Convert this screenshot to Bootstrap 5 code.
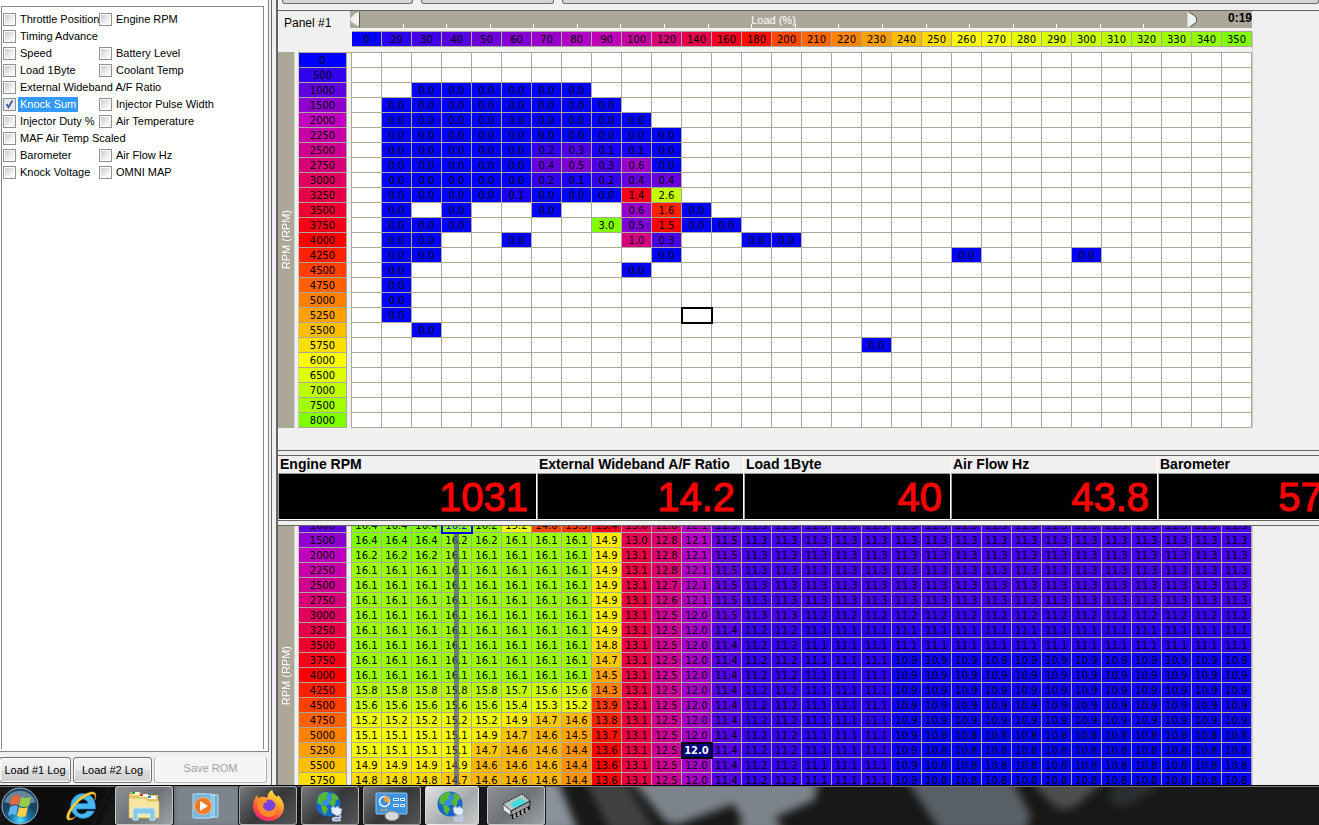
<!DOCTYPE html>
<html lang="en">
<head>
<meta charset="utf-8">
<meta name="viewport" content="width=device-width, initial-scale=1">
<title>ROM tuning log viewer</title>
<link href="https://cdn.jsdelivr.net/npm/bootstrap@5.3.0/dist/css/bootstrap.min.css" rel="stylesheet">
<style>
  :root { --face: #f0f0f0; --line: #aca899; --edge: #646464; }
  body { background: var(--face); color: #000; font: 11px/15px "Liberation Sans", Arial, sans-serif; }

  /* sidebar */
  .side { flex: 0 0 272px; border-right: 1px solid var(--edge); }
  .side-box { border: 1px solid #828790; border-width: 0 1px 1px 0; background: #fff; margin-right: 2px; padding: 6px 4px 2px 1px; }
  .side-list { border: 1px solid #828790; border-bottom: 0; padding: 4px 0 0 1px; }
  .pid { height: 17px; white-space: nowrap; }
  .pid-first { width: 96px; }
  .pid input { appearance: none; flex: none; width: 13px; height: 13px; margin: 0 2px 0 0; border: 1px solid #8e8f8f; background: linear-gradient(135deg, #c8ccd2, #f6f6f6 75%) content-box #f4f4f4; padding: 1px; }
  .pid input:checked { background: url("data:image/svg+xml,%3Csvg xmlns='http://www.w3.org/2000/svg' viewBox='0 0 11 11'%3E%3Cpath d='M2.5 5l2 3.2L8.500 1.500' fill='none' stroke='%234b60a8' stroke-width='2'/%3E%3C/svg%3E") #e9ebef; }
  .pid label { padding: 0 2px; }
  .pid input:checked + label { background: #3399ff; color: #fff; }
  .side-foot { height: 33px; gap: 2px; padding-top: 5px; }
  .push { width: 79px; height: 26px; padding: 0; border: 1px solid #707070; border-radius: 3px; background: linear-gradient(#f2f2f2, #ebebeb 50%, #dddddd 50%, #cfcfcf); box-shadow: inset 0 0 0 1px #fcfcfc; color: #000; white-space: nowrap; }
  .push-edge { width: 72px; margin-left: -1px; }
  .push:disabled { width: auto; background: #f4f4f4; border-color: #adb2b5; border-top-color: transparent; color: #a0a0a0; padding-bottom: 4px; }

  /* work area */
  .work { margin-left: 4px; border-left: 2px solid var(--edge); min-width: 0; }
  .tool-tabs { height: 11px; flex: none; border-bottom: 1px solid var(--edge); }
  .tool-tab { height: 4px; border: 1px solid #707070; border-top: 0; border-radius: 0 0 3px 3px; background: #d4d4d4; }
  .map-panel { flex: none; padding-bottom: 22px; border-bottom: 1px solid var(--edge); }
  .map-title { width: 72px; height: 17px; padding: 5px 0 0 6px; font-size: 12px; }
  .strip { width: 902px; height: 17px; background: var(--line); }
  .strip-scale { flex: 1; position: relative; }
  .tick { border-right: 1px solid #fff; height: 4px; }
  .strip-name { position: absolute; inset: 2px 0 0; text-align: center; color: #fff; }
  .strip-time { width: 55px; font-weight: bold; font-size: 12px; }
  .axis-bar { width: 17px; background: var(--line); border-right: 1px solid #d8d4c8; color: #fff; }
  .map-panel .axis-bar { margin-top: 24px; }
  .map-panel .map { margin-top: 3px; }
  .axis-name { writing-mode: vertical-rl; transform: rotate(180deg); font-size: 11px; white-space: nowrap; }
  .map { border-collapse: separate; border-spacing: 0; table-layout: fixed; width: 954px; margin-left: 3px; font: 10px/13px "DejaVu Sans", Verdana, sans-serif; border-right: 1px solid #d0ccc0; }
  .map th, .map td { padding: 0; height: 15px; text-align: center; font-weight: normal; border-right: 1px solid var(--line); border-bottom: 1px solid var(--line); background: #fff; white-space: nowrap; }
  .map .void { border-bottom: 0; background: var(--face); }
  .map thead th { border-top: 1px solid var(--line); height: 16px; }
  .map thead .void { border: 0; }
  .map .spacer td { height: 6px; background: var(--face); border-right: 0; }
  .map tbody th { border-left: 1px solid #d0ccc0; }
  .map .cursor { outline: 2px solid #000; outline-offset: -1px; position: relative; z-index: 1; }
  .map .live { outline: 2px solid #0000ff; outline-offset: -1px; position: relative; z-index: 1; color: #0000ff; }
  .map .picked { background: #000080 !important; color: #fff; font-weight: bold; }
  .map .trace { position: relative; }
  .map .trace::after { content: ""; position: absolute; left: 12px; top: 0; bottom: -1px; width: 5px; background: rgba(80, 85, 150, .7); }

  .gauges { flex: none; margin-top: 4px; border: 1px solid var(--edge); border-width: 1px 0; overflow: hidden; }
  .gauge { flex: 0 0 207px; border-right: 1px solid #fff; }
  .gauge:first-child { flex-basis: 259px; }
  .gauge-name { height: 17px; padding: 1px 0 0 2px; font-weight: bold; font-size: 14px; line-height: 15px; white-space: nowrap; }
  .gauge-value { height: 47px; border: 1px solid #a0a0a0; border-width: 1px 0 0 1px; border-bottom: 1px solid #fff; background: #000; color: #f00; -webkit-text-stroke: 1px #f00; font-size: 40px; line-height: 46px; padding-right: 8px; text-align: right; }
  .lower { margin-top: 4px; border-top: 1px solid var(--edge); min-height: 0; overflow: hidden; }
  .lower .axis-name { padding-bottom: 46px; }

  /* taskbar */
  .tasks { flex: none; position: relative; height: 40px; border-top: 1px solid #000; background: #181818; overflow: hidden; }
  .tasks-glass { position: absolute; inset: 0; width: 100%; height: 100%; }
  .tasks-row { position: relative; height: 39px; }
  .task { padding: 0; border: 0; background: none; height: 39px; display: flex; align-items: center; justify-content: center; }
  .task-open { width: 58px; border: 1px solid rgba(255,255,255,.5); border-radius: 3px; background: linear-gradient(135deg, rgba(160,165,170,.75), rgba(70,72,76,.6) 55%, rgba(110,112,116,.6)); box-shadow: 0 0 0 1px #111; }
  .task-gray { background: linear-gradient(135deg, #8d9194, #6e7276 50%, #a0a4a7); }
  .task-dark { background: linear-gradient(135deg, #77787a, #363738 50%, #555658); }
  .task-lit { background: linear-gradient(135deg, #e0e2e3, #a5a8aa 60%, #c8cacb); }
</style>
</head>
<body class="vh-100 d-flex flex-column overflow-hidden">

<main class="d-flex flex-grow-1" style="min-height:0">
  <aside class="side d-flex flex-column">
    <div class="side-box d-flex flex-column flex-grow-1">
      <div class="side-list flex-grow-1" id="pids"></div>
    </div>
    <div class="side-foot d-flex">
      <button class="push push-edge" type="button">Load #1 Log</button>
      <button class="push" type="button">Load #2 Log</button>
      <button class="push flex-grow-1 me-1" type="button" disabled>Save ROM</button>
    </div>
  </aside>

  <section class="work d-flex flex-column flex-grow-1">
    <div class="tool-tabs d-flex gap-2 ps-1">
      <div class="tool-tab" style="width:131px"></div>
      <div class="tool-tab" style="width:133px"></div>
      <div class="tool-tab flex-grow-1"></div>
    </div>
    <div class="map-panel">
      <div class="d-flex">
        <div class="map-title">Panel #1</div>
        <div class="strip d-flex">
          <svg width="10" height="17" viewBox="0 0 10 17"><path d="M9.500 1v14.500L6 14 .5 10V7L6 2z" fill="#f0f0f0"/><path d="M9.500 1v15" stroke="#555"/></svg>
          <div class="strip-scale d-flex align-items-end pb-0" id="scale"><span class="strip-name">Load (%)</span></div>
          <svg width="10" height="17" viewBox="0 0 10 17"><path d="M.5 1L7 4l2.500 3v4L2 16H.5z" fill="#f0f0f0"/><path d="M2 1l6 4 1.500 2v4L3 16" fill="none" stroke="#555"/></svg>
          <div class="strip-time text-end">0:19</div>
        </div>
      </div>
      <div class="d-flex align-items-stretch">
        <div class="axis-bar d-flex align-items-center justify-content-center"><span class="axis-name">RPM (RPM)</span></div>
        <table class="map" id="knock"></table>
      </div>
    </div>

    <div class="gauges d-flex" id="gauges"></div>

    <div class="lower flex-grow-1" id="lower">
      <div class="d-flex">
        <div class="axis-bar d-flex align-items-center justify-content-center"><span class="axis-name">RPM (RPM)</span></div>
        <table class="map" id="afr"></table>
      </div>
    </div>
  </section>
</main>

<footer class="tasks">
  <svg class="tasks-glass" viewBox="0 0 1319 39" preserveAspectRatio="none" aria-hidden="true">
    <defs>
      <filter id="soft" x="-10%" y="-50%" width="120%" height="200%"><feGaussianBlur stdDeviation="4"/></filter>
      <symbol id="globe" viewBox="0 0 32 32">
        <circle cx="14" cy="14" r="12.500" fill="#1768c4"/>
        <circle cx="11" cy="9" r="7" fill="#58b4f0" opacity=".5"/>
        <path d="M4 7q5-5 9-5l2 2-3 2 1 3-4 2-2 4-4-2zM17 3q6 1 8 6l-3 1-1 5-3 2-3-5 3-3zM7 15l5 1 2 3-3 6-3-4z" fill="#57b832"/>
        <path d="M17 18l3-2 1 2 3-2 1 2 3 1-1 5-4 2-5-3z" fill="#e4eefa" stroke="#7c98bd" stroke-width=".7"/>
        <path d="M25 25q3 2 0 3-7-1-6 2 3 1 8 0" fill="none" stroke="#b9d3f2" stroke-width="2"/>
      </symbol>
    </defs>
    <g filter="url(#soft)">
      <path d="M30-5H115L90 50H0z" fill="#0b0b0b"/>
      <path d="M170-5h75v50h-75z" fill="#7b848e"/>
      <path d="M530-5h28l20 50h-48z" fill="#89919a"/>
      <path d="M585-5h40l30 50h-45z" fill="#404143"/>
      <path d="M630-8H818L815 14 774 32 786 46H738L742 34 734 18 682 37Q672 41 664 34z" fill="#7d838a"/>
      <path d="M905-8h106l20 38-6 16h-84z" fill="#595f65"/>
      <path d="M1028-8h80l-32 28q-15 8-25-3z" fill="#4b4e50"/>
      <path d="M1112-8h60l-37 24q-15 8-25 0z" fill="#2c2d30"/>
    </g>
    <path d="M0 .5H1319" stroke="#777"/>
  </svg>
  <div class="tasks-row d-flex">
    <button class="task" type="button" aria-label="Start" style="width:40px">
      <svg width="38" height="38" viewBox="0 0 38 38">
        <defs><radialGradient id="orb" cy=".9"><stop offset="0" stop-color="#4fe0ff"/><stop offset=".5" stop-color="#1c76a8"/><stop offset="1" stop-color="#174463"/></radialGradient></defs>
        <circle cx="19" cy="19" r="18" fill="url(#orb)" stroke="#9bb8c8"/>
        <path d="M3 15a17 17 0 0 1 32 0q-16 6-32 0z" fill="#fff" opacity=".35"/>
        <path d="M11 10q4-3 8-1l-2 9q-4-2-8 1z" fill="#ee6434"/>
        <path d="M20 10q4 2 10 0l-2 9q-5 2-10 0z" fill="#9aca4c"/>
        <path d="M9 20q4-3 8-1l-2 9q-4-2-8 1z" fill="#60b4ee"/>
        <path d="M18 20q4 2 9 0l-2 9q-5 2-9 0z" fill="#fbce4b"/>
      </svg>
    </button>
    <button class="task" type="button" aria-label="Internet Explorer" style="width:75px">
      <svg class="ms-2" width="34" height="34" viewBox="0 0 34 34">
        <path fill-rule="evenodd" d="M17 4.500A12.500 12.500 0 1 0 29.500 22H22q-1.500 3-5 3-5 0-5.500-5h19Q31 4.500 17 4.500zM11 14.500q1-4.500 6-4.500t6 4.500z" fill="#48b6f0" stroke="#1b7cc8" stroke-width=".6"/>
        <path d="M3 31Q-1 28 6 18 16 5 26 3q7-1 4 8 1-7-3-6Q18 7 9 18 2 28 5 29.500q2 .5 6-2Q7 32 3 31z" fill="#fbd33a" stroke="#d89d13" stroke-width=".5"/>
      </svg>
    </button>
    <button class="task task-open task-gray" type="button" aria-label="File Explorer">
      <svg width="34" height="32" viewBox="0 0 34 32">
        <path d="M2 5l2-3h9l2 3h16v22H3z" fill="#eac766"/>
        <path d="M5 2h7v3H5z" fill="#fff"/><path d="M5 2h3v2H5z" fill="#28a428"/><path d="M13 4h8v3h-8z" fill="#fff"/><path d="M13 4h3v2h-3z" fill="#d04128"/><path d="M21 6h8v3h-8z" fill="#fff"/><path d="M21 6h3v2h-3z" fill="#328bd0"/>
        <path d="M2 8h17l2 3h11v17H2z" fill="#f8e6a0" stroke="#d5af4d" stroke-width=".6"/>
        <path d="M6 30V20q0-2 2-2h18q2 0 2 2v10h-5v-6H11v6z" fill="#8ac8e8" stroke="#c8eaff"/>
      </svg>
    </button>
    <button class="task" type="button" aria-label="Media Player" style="width:66px">
      <svg width="28" height="28" viewBox="0 0 28 28"><path d="M9 2l17 1v22l-17 1z" fill="#6db0d6" stroke="#b8dcf0"/><path d="M5 2l17 1v22L5 26z" fill="#83c0e0" stroke="#c6e4f4"/><path d="M1 2h18v24H1z" fill="#75b6dc" stroke="#b3dbf0"/><circle cx="11" cy="14" r="8.500" fill="#ef7926" stroke="#fbb27a"/><path d="M8 9l8 5-8 5z" fill="#fff"/></svg>
    </button>
    <button class="task task-open task-dark" type="button" aria-label="Firefox">
      <svg width="33" height="33" viewBox="0 0 33 33">
        <defs><linearGradient id="fox" x1=".8" y1="0" x2=".3" y2="1"><stop offset="0" stop-color="#fff44f"/><stop offset=".4" stop-color="#ffa02c"/><stop offset=".75" stop-color="#ff4a3c"/><stop offset="1" stop-color="#f0247a"/></linearGradient></defs>
        <path d="M20 1q1 4 5 7l1-2q6 6 6 12a15.500 14 0 0 1-31 0Q1 11 5 6l1 3 3-1q4-1 6 1 1-6 5-8z" fill="url(#fox)"/>
        <circle cx="17" cy="17" r="6.500" fill="#7542e0"/><path d="M5 12l10-1q1 2-3 3-3 6 4 8 7 0 8-7 4 12-8 13Q5 26 5 12z" fill="#ff8a2a"/>
      </svg>
    </button>
    <button class="task task-open task-dark ms-1" type="button" aria-label="Network"><svg width="32" height="32"><use href="#globe"/></svg></button>
    <button class="task task-open task-dark ms-1" type="button" aria-label="Control Panel">
      <svg width="34" height="30" viewBox="0 0 34 30"><rect x="1" y="2" width="31" height="21" rx="1" fill="#3f92dc" stroke="#8ec6f2"/><circle cx="9.500" cy="10.500" r="5" fill="none" stroke="#fff" stroke-width="1.500"/><path d="M9.500 10.500V4a6.500 6.500 0 0 1 5 8z" fill="#f7a335"/><path d="M18.500 7.500h5v2h-5zm7 0h4v2h-4zm-7 6h5v2h-5zm7 0h4v2h-4z" fill="#2b6fb4" stroke="#e8f6ff"/><path d="M6 18h2v2H6zm4 0h2v2h-2z" fill="#ffa32f"/><ellipse cx="17" cy="25" rx="7" ry="4.500" fill="#d6d8da" stroke="#999"/></svg>
    </button>
    <button class="task task-open task-lit ms-1" type="button" aria-label="Network window" style="width:54px"><svg width="32" height="32"><use href="#globe"/></svg></button>
    <button class="task task-open task-gray ms-2" type="button" aria-label="ROM editor">
      <svg width="32" height="28" viewBox="0 0 32 28"><path d="M3 12L22 2l8 7-19 10z" fill="#b8c6c4" stroke="#222" stroke-dasharray="2 1"/><path d="M3 12l8 7v5l-8-6z" fill="#e8e8e8" stroke="#555"/><path d="M11 19L30 9v5L11 24z" fill="#9a9a9a" stroke="#222"/><path d="M10 12l11-6 6 4-12 6z" fill="#46d9dc"/><path d="M13 22v5m4-7v5m4-7v5m4-7v5m4-7v4" stroke="#111" stroke-width="2"/><path d="M14 22v4m4-6v4m4-6v4m4-6v4" stroke="#ddd"/></svg>
    </button>
  </div>
</footer>

<script src="https://cdn.jsdelivr.net/npm/bootstrap@5.3.0/dist/js/bootstrap.bundle.min.js"></script>
<script>
const rpm = [0,500,1000,1500,2000,2250,2500,2750,3000,3250,3500,3750,4000,4250,4500,4750,5000,5250,5500,5750,6000,6500,7000,7500,8000];
const load = [0,20,30,40,50,60,70,80,90,100,120,140,160,180,200,210,220,230,240,250,260,270,280,290,300,310,320,330,340,350];

// blue, purple, red, yellow, green heat scale
const stops = [[0,0,255],[191,0,191],[255,0,0],[255,255,0],[128,255,0]];
function heat(v, min, max) {
  const t = (v - min) / (max - min) * 4, i = Math.min(3, Math.floor(t));
  return 'rgb(' + stops[i].map((c, k) => Math.round(c + (stops[i + 1][k] - c) * (t - i))) + ')';
}

const pids = [['Throttle Position','Engine RPM'],['Timing Advance'],['Speed','Battery Level'],['Load 1Byte','Coolant Temp'],
  ['External Wideband A/F Ratio'],['Knock Sum','Injector Pulse Width'],['Injector Duty %','Air Temperature'],
  ['MAF Air Temp Scaled'],['Barometer','Air Flow Hz'],['Knock Voltage','OMNI MAP']];
document.getElementById('pids').innerHTML = pids.map((row, r) => '<div class="d-flex">' + row.map((name, c) =>
  `<div class="pid d-flex align-items-center ${c ? '' : 'pid-first'}"><input type="checkbox" id="p${r}${c}" ${name === 'Knock Sum' ? 'checked' : ''}><label for="p${r}${c}">${name}</label></div>`).join('') + '</div>').join('');

document.getElementById('scale').insertAdjacentHTML('beforeend', '<i class="tick flex-fill"></i>'.repeat(18) + '<i class="flex-fill"></i>');

document.getElementById('gauges').innerHTML = [['Engine RPM','1031'],['External Wideband A/F Ratio','14.2'],['Load 1Byte','40'],['Air Flow Hz','43.8'],['Barometer','57.1']]
  .map(g => `<div class="gauge"><div class="gauge-name">${g[0]}</div><div class="gauge-value">${g[1]}</div></div>`).join('');

// knock readings: column index -> value for every engine speed
const z = (a, b) => Object.fromEntries(Array.from({length: b - a + 1}, (_, i) => [a + i, 0]));
const knock = {
  1000: z(2,7), 1500: z(1,8), 2000: z(1,9), 2250: z(1,10),
  2500: {...z(1,10), 6:.2, 7:.3, 8:.1, 9:.1},
  2750: {...z(1,10), 6:.4, 7:.5, 8:.3, 9:.6},
  3000: {...z(1,5), 6:.2, 7:.1, 8:.2, 9:.4, 10:.4},
  3250: {...z(1,8), 5:.1, 9:1.4, 10:2.6},
  3500: {1:0, 3:0, 6:0, 9:.6, 10:1.6, 11:0},
  3750: {...z(1,3), 8:3, 9:.5, 10:1.5, 11:0, 12:0},
  4000: {1:0, 2:0, 5:0, 9:1, 10:.3, 13:0, 14:0},
  4250: {1:0, 2:0, 10:0, 20:0, 24:0},
  4500: {1:0, 9:0}, 4750: {1:0}, 5000: {1:0}, 5250: {1:0}, 5500: {2:0}, 5750: {17:0}
};
const cols = '<colgroup><col style="width:49px"><col style="width:5px">' + '<col style="width:30px">'.repeat(30) + '</colgroup>';
const rowHead = r => `<tr><th scope="row" style="background:${heat(r, 0, 8000)}">${r}</th><td class="void"></td>`;

document.getElementById('knock').innerHTML = cols + '<thead><tr><td class="void"></td><td class="void"></td>' +
  load.map(l => `<th scope="col" style="background:${heat(l, 0, 350)}">${l}</th>`).join('') + '</tr></thead><tbody><tr class="spacer">' + '<td></td>'.repeat(32) + '</tr>' +
  rpm.map(r => rowHead(r) + load.map((l, c) => {
    const v = (knock[r] || {})[c];
    const cls = r === 5250 && l === 140 ? ' class="cursor"' : '';
    return v === undefined ? `<td${cls}></td>` : `<td style="background:${heat(v, 0, 3)}">${v.toFixed(1)}</td>`;
  }).join('') + '</tr>').join('') + '</tbody>';

// air/fuel map, "value*count" runs
const afr = {
  1000: '16.4*3 16.2*2 15.2 14.0 13.9 13.4 13.0 12.8 12.1 11.5 11.3*17',
  1500: '16.4*3 16.2*2 16.1*3 14.9 13.0 12.8 12.1 11.5 11.3*17',
  2000: '16.2*3 16.1*5 14.9 13.1 12.8 12.1 11.5 11.3*17',
  2250: '16.1*8 14.9 13.1 12.8 12.1 11.5 11.3*17',
  2500: '16.1*8 14.9 13.1 12.7 12.1 11.5 11.3*17',
  2750: '16.1*8 14.9 13.1 12.6 12.1 11.5 11.3*17',
  3000: '16.1*8 14.9 13.1 12.5 12.0 11.5 11.3*2 11.2*15',
  3250: '16.1*8 14.9 13.1 12.5 12.0 11.4 11.2*2 11.1*15',
  3500: '16.1*8 14.8 13.1 12.5 12.0 11.4 11.2*2 11.1*15',
  3750: '16.1*8 14.7 13.1 12.5 12.0 11.4 11.2*2 11.1*3 10.9*12',
  4000: '16.1*8 14.5 13.1 12.5 12.0 11.4 11.2*2 11.1*3 10.9*12',
  4250: '15.8*5 15.7 15.6*2 14.3 13.1 12.5 12.0 11.4 11.2*2 11.1*3 10.9*12',
  4500: '15.6*5 15.4 15.3 15.2 13.9 13.1 12.5 12.0 11.4 11.2*2 11.1*3 10.9*12',
  4750: '15.2*5 14.9 14.7 14.6 13.8 13.1 12.5 12.0 11.4 11.2*2 11.1*3 10.9*12',
  5000: '15.1*4 14.9 14.7 14.6 14.5 13.7 13.1 12.5 12.0 11.4 11.2*2 11.1*3 10.9 10.8*11',
  5250: '15.1*4 14.7 14.6*2 14.4 13.6 13.1 12.5 12.0 11.4 11.2*2 11.1*3 10.9 10.8*11',
  5500: '14.9*4 14.6*3 14.4 13.6 13.1 12.5 12.0 11.4 11.2*2 11.1*3 10.9 10.8*11',
  5750: '14.8*3 14.7 14.6*3 14.4 13.6 13.1 12.5 12.0 11.4 11.2*2 11.1*3 10.9 10.8*11'
};
document.getElementById('afr').innerHTML = cols + '<tbody>' + Object.entries(afr).map(([r, runs]) => {
  const vals = runs.split(' ').flatMap(s => { const [v, n] = s.split('*'); return Array(+(n || 1)).fill(v); });
  return rowHead(r) + vals.map((v, c) => {
    const cls = load[c] === 40 ? (r === '1000' ? 'live' : 'trace') : (r === '5250' && load[c] === 140 ? 'cursor picked' : '');
    return `<td class="${cls}" style="background:${heat(+v, 10.8, 16.4)}">${v}</td>`;
  }).join('') + '</tr>';
}).join('') + '</tbody>';
document.getElementById('lower').scrollTop = 8;
</script>
</body>
</html>
